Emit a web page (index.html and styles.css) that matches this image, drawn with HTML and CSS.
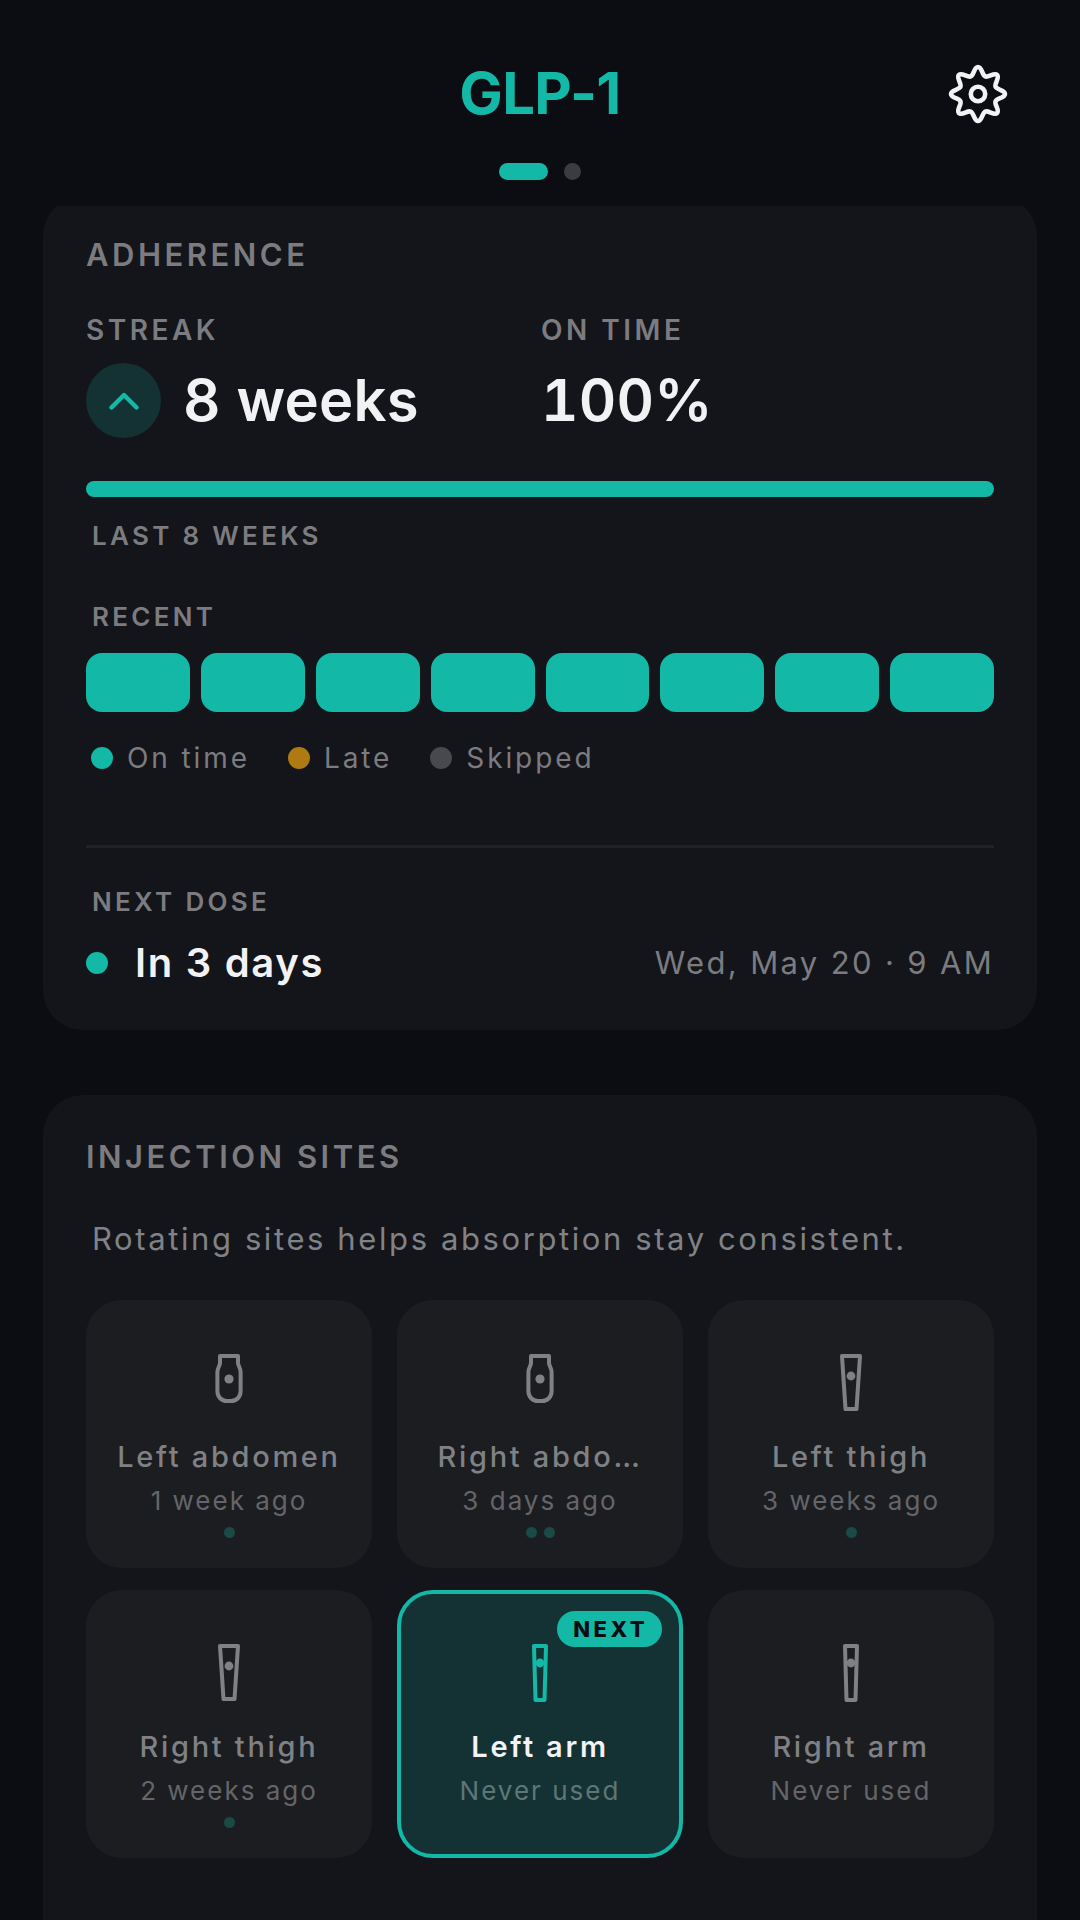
FILE: index.html
```html
<!DOCTYPE html>
<html lang="en">

<head>
    <meta charset="UTF-8" />
    <meta name="viewport" content="width=device-width, initial-scale=1.0" />
    <title>GLP-1</title>
    <link rel="stylesheet" href="styles.css">
</head>

<body>
    <div class="header">
        <h1 class="title">GLP-1</h1>
        <svg class="gear" viewBox="0 0 60 60" fill="none" stroke="#f2f2f4" stroke-width="4.6" stroke-linejoin="round">
            <path d="M30 3C34 3 34.04 11.11 37.27 12.45C40.5 13.79 46.26 8.08 49.09 10.91C51.92 13.74 46.21 19.5 47.55 22.73C48.89 25.96 57 26 57 30C57 34 48.89 34.04 47.55 37.27C46.21 40.5 51.92 46.26 49.09 49.09C46.26 51.92 40.5 46.21 37.27 47.55C34.04 48.89 34 57 30 57C26 57 25.96 48.89 22.73 47.55C19.5 46.21 13.74 51.92 10.91 49.09C8.08 46.26 13.79 40.5 12.45 37.27C11.11 34.04 3 34 3 30C3 26 11.11 25.96 12.45 22.73C13.79 19.5 8.08 13.74 10.91 10.91C13.74 8.08 19.5 13.79 22.73 12.45C25.96 11.11 26 3 30 3Z" />
            <circle cx="30" cy="30" r="7.2" />
        </svg>
    </div>
    <div class="pager">
        <span class="pager-pill"></span>
        <span class="pager-dot"></span>
    </div>

    <div class="scroll">
        <div class="card adherence">
            <div class="card-title">ADHERENCE</div>
            <div class="stats">
                <div class="stat">
                    <div class="stat-label">STREAK</div>
                    <div class="stat-row">
                        <span class="streak-icon">
                            <svg viewBox="0 0 30 18" width="30" height="18" fill="none" stroke="#14b8a6" stroke-width="4.4" stroke-linecap="round" stroke-linejoin="round">
                                <path d="M2.5 15.5L15 3L27.5 15.5" />
                            </svg>
                        </span>
                        <span class="stat-value">8 weeks</span>
                    </div>
                </div>
                <div class="stat">
                    <div class="stat-label">ON TIME</div>
                    <div class="stat-row">
                        <span class="stat-value">100%</span>
                    </div>
                </div>
            </div>
            <div class="progress"></div>
            <div class="small-label weeks-label">LAST 8 WEEKS</div>
            <div class="small-label recent-label">RECENT</div>
            <div class="weeks">
                <div class="week"></div>
                <div class="week"></div>
                <div class="week"></div>
                <div class="week"></div>
                <div class="week"></div>
                <div class="week"></div>
                <div class="week"></div>
                <div class="week"></div>
            </div>
            <div class="legend">
                <span class="legend-item"><i class="dot teal"></i>On time</span>
                <span class="legend-item"><i class="dot amber"></i>Late</span>
                <span class="legend-item"><i class="dot grey"></i>Skipped</span>
            </div>
            <div class="divider"></div>
            <div class="small-label next-label">NEXT DOSE</div>
            <div class="next-row">
                <i class="dot teal"></i>
                <span class="next-value">In 3 days</span>
                <span class="next-date">Wed, May 20 · 9 AM</span>
            </div>
        </div>

        <div class="card sites">
            <div class="card-title">INJECTION SITES</div>
            <p class="helper">Rotating sites helps absorption stay consistent.</p>
            <div class="site-grid">
                <div class="site">
                    <svg class="site-icon" viewBox="0 0 60 60" fill="none" stroke="currentColor" stroke-width="4" stroke-linejoin="round">
                        <path d="M21 4H39V11C39 14 41.6 15.5 41.6 20V39C41.6 45 37.5 49 32 49H28C22.5 49 18.4 45 18.4 39V20C18.4 15.5 21 14 21 11Z" />
                        <circle cx="30" cy="27" r="4.6" fill="currentColor" stroke="none" />
                    </svg>
                    <div class="site-name">Left abdomen</div>
                    <div class="site-time">1 week ago</div>
                    <div class="site-dots"><i></i></div>
                </div>
                <div class="site">
                    <svg class="site-icon" viewBox="0 0 60 60" fill="none" stroke="currentColor" stroke-width="4" stroke-linejoin="round">
                        <path d="M21 4H39V11C39 14 41.6 15.5 41.6 20V39C41.6 45 37.5 49 32 49H28C22.5 49 18.4 45 18.4 39V20C18.4 15.5 21 14 21 11Z" />
                        <circle cx="30" cy="27" r="4.6" fill="currentColor" stroke="none" />
                    </svg>
                    <div class="site-name">Right abdo…</div>
                    <div class="site-time">3 days ago</div>
                    <div class="site-dots"><i></i><i></i></div>
                </div>
                <div class="site">
                    <svg class="site-icon" viewBox="0 0 60 60" fill="none" stroke="currentColor" stroke-width="4" stroke-linejoin="round">
                        <path d="M21 4H39L35.5 57H24.5Z" />
                        <circle cx="30" cy="24" r="4.4" fill="currentColor" stroke="none" />
                    </svg>
                    <div class="site-name">Left thigh</div>
                    <div class="site-time">3 weeks ago</div>
                    <div class="site-dots"><i></i></div>
                </div>
                <div class="site">
                    <svg class="site-icon" viewBox="0 0 60 60" fill="none" stroke="currentColor" stroke-width="4" stroke-linejoin="round">
                        <path d="M21 4H39L35.5 57H24.5Z" />
                        <circle cx="30" cy="24" r="4.4" fill="currentColor" stroke="none" />
                    </svg>
                    <div class="site-name">Right thigh</div>
                    <div class="site-time">2 weeks ago</div>
                    <div class="site-dots"><i></i></div>
                </div>
                <div class="site site-next">
                    <span class="next-badge">NEXT</span>
                    <svg class="site-icon" viewBox="0 0 60 60" fill="none" stroke="currentColor" stroke-width="4" stroke-linejoin="round">
                        <path d="M24 4H36L34.5 58H25.5Z" />
                        <circle cx="30" cy="21" r="4.4" fill="currentColor" stroke="none" />
                    </svg>
                    <div class="site-name">Left arm</div>
                    <div class="site-time">Never used</div>
                </div>
                <div class="site">
                    <svg class="site-icon" viewBox="0 0 60 60" fill="none" stroke="currentColor" stroke-width="4" stroke-linejoin="round">
                        <path d="M24 4H36L34.5 58H25.5Z" />
                        <circle cx="30" cy="21" r="4.4" fill="currentColor" stroke="none" />
                    </svg>
                    <div class="site-name">Right arm</div>
                    <div class="site-time">Never used</div>
                </div>
            </div>
        </div>
    </div>
</body>

</html>
```

FILE: styles.css
```css
* {
    box-sizing: border-box;
}

body {
    margin: 0;
    height: 1920px;
    overflow: hidden;
    background-color: #0b0d12;
    font-family: "Inter", "Noto Sans", sans-serif;
    color: #f2f2f4;
}

.header {
    display: grid;
    grid-template-columns: 1fr auto 1fr;
    align-items: center;
    height: 70px;
    margin-top: 59px;
    padding-right: 72px;
    padding-left: 72px;
}

.title {
    grid-column: 2;
    align-self: start;
    margin: 0;
    font-size: 58px;
    line-height: 68px;
    font-weight: 700;
    letter-spacing: -0.7px;
    color: #14b8a6;
}

.gear {
    grid-column: 3;
    justify-self: end;
    width: 60px;
    height: 60px;
}

.pager {
    display: flex;
    justify-content: center;
    gap: 16px;
    margin-top: 34px;
}

.pager-pill {
    width: 49px;
    height: 17px;
    border-radius: 9px;
    background-color: #14b8a6;
}

.pager-dot {
    width: 17px;
    height: 17px;
    border-radius: 50%;
    background-color: #3a3c42;
}

.scroll {
    height: 1714px;
    margin-top: 26px;
    padding: 0 43px;
    overflow: hidden;
}

.card {
    padding: 41px 43px 44px;
    border-radius: 40px;
    background-color: #13151a;
}

.adherence {
    margin-top: -10px;
}

.sites {
    margin-top: 65px;
    padding-top: 44px;
    padding-bottom: 120px;
}

.card-title {
    font-size: 31px;
    line-height: 36px;
    font-weight: 600;
    letter-spacing: 3.5px;
    color: #7c7c80;
}

.stats {
    display: flex;
    margin-top: 39px;
}

.stat:first-child {
    width: 455px;
}

.stat-label {
    font-size: 28px;
    line-height: 36px;
    font-weight: 600;
    letter-spacing: 3.5px;
    color: #7c7c80;
}

.stat-row {
    display: flex;
    align-items: center;
    gap: 22px;
    height: 75px;
    margin-top: 15px;
}

.streak-icon {
    display: flex;
    align-items: center;
    justify-content: center;
    width: 75px;
    height: 75px;
    border-radius: 50%;
    background-color: #143234;
}

.stat-value {
    font-size: 58px;
    line-height: 75px;
    font-weight: 600;
    letter-spacing: 0.2px;
    font-variant-numeric: tabular-nums;
    color: #f2f2f4;
}

.progress {
    height: 16px;
    margin-top: 43px;
    border-radius: 8px;
    background-color: #14b8a6;
}

.small-label {
    padding-left: 6px;
    font-size: 26px;
    line-height: 32px;
    font-weight: 600;
    letter-spacing: 3.3px;
    color: #7c7c80;
}

.weeks-label {
    margin-top: 23px;
}

.recent-label {
    margin-top: 49px;
}

.weeks {
    display: grid;
    grid-template-columns: repeat(8, 1fr);
    gap: 11px;
    margin-top: 20px;
}

.week {
    height: 59px;
    border-radius: 16px;
    background-color: #14b8a6;
}

.legend {
    display: flex;
    gap: 38px;
    margin-top: 29px;
    padding-left: 5px;
}

.legend-item {
    display: flex;
    align-items: center;
    gap: 14px;
    font-size: 28px;
    line-height: 34px;
    letter-spacing: 2.9px;
    color: #7c7c80;
}

.dot {
    display: block;
    flex: none;
    width: 22px;
    height: 22px;
    border-radius: 50%;
}

.teal {
    background-color: #14b8a6;
}

.amber {
    background-color: #b07a12;
}

.grey {
    background-color: #47494f;
}

.divider {
    height: 3px;
    margin-top: 70px;
    background-color: #1f2126;
}

.next-label {
    margin-top: 38px;
}

.next-row {
    display: flex;
    align-items: center;
    height: 46px;
    margin-top: 22px;
}

.next-value {
    margin-left: 27px;
    font-size: 40px;
    line-height: 46px;
    font-weight: 600;
    letter-spacing: 1.7px;
    color: #f2f2f4;
}

.next-date {
    margin-left: auto;
    font-size: 31px;
    line-height: 46px;
    letter-spacing: 2.35px;
    color: #7c7c80;
}

.helper {
    margin: 44px 0 0;
    padding-left: 6px;
    font-size: 31px;
    line-height: 40px;
    letter-spacing: 2.6px;
    color: #818286;
}

.site-grid {
    display: grid;
    grid-template-columns: repeat(3, 1fr);
    grid-auto-rows: 268px;
    column-gap: 25px;
    row-gap: 22px;
    margin-top: 41px;
}

.site {
    position: relative;
    display: flex;
    flex-direction: column;
    align-items: center;
    padding-top: 48px;
    border: 4px solid transparent;
    border-radius: 36px;
    background-color: #1b1d21;
    color: #808185;
}

.site-next {
    border-color: #14b8a6;
    background-color: #143234;
    color: #14b8a6;
}

.site-icon {
    display: block;
    width: 60px;
    height: 60px;
}

.site-name {
    margin-top: 27px;
    font-size: 29px;
    line-height: 36px;
    font-weight: 500;
    letter-spacing: 2.7px;
    color: #808185;
}

.site-next .site-name {
    font-weight: 600;
    color: #f2f2f4;
}

.site-time {
    margin-top: 9px;
    font-size: 26px;
    line-height: 34px;
    letter-spacing: 2px;
    color: #656569;
}

.site-next .site-time {
    color: #5f7676;
}

.site-dots {
    display: flex;
    gap: 7px;
    margin-top: 9px;
}

.site-dots i {
    display: block;
    width: 11px;
    height: 11px;
    border-radius: 50%;
    background-color: #1a4a46;
}

.next-badge {
    position: absolute;
    top: 17px;
    right: 17px;
    padding: 0 14px 0 16px;
    border-radius: 18px;
    font-size: 22px;
    line-height: 36px;
    font-weight: 800;
    letter-spacing: 3.4px;
    color: #0b0d12;
    background-color: #14b8a6;
}
```
